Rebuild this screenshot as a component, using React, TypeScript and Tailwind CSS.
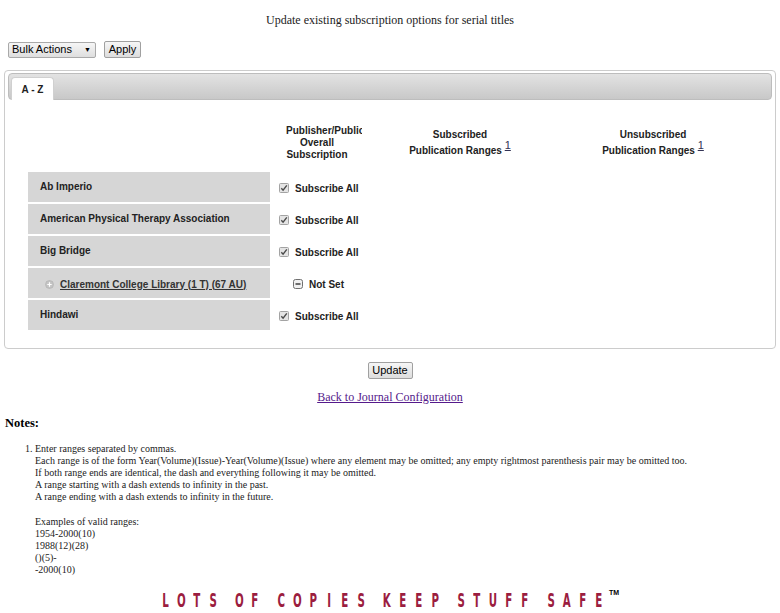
import React from 'react'

const rows = [
  { name: 'Ab Imperio', state: 'all' },
  { name: 'American Physical Therapy Association', state: 'all' },
  { name: 'Big Bridge', state: 'all' },
  { name: 'Claremont College Library (1 T) (67 AU)', state: 'none', link: true },
  { name: 'Hindawi', state: 'all' },
]

const slogan = 'LOTS OF COPIES KEEP STUFF SAFE'

function CheckIcon() {
  return (
    <svg width="10" height="10" viewBox="0 0 10 10" className="shrink-0">
      <rect x="0.5" y="0.5" width="9" height="9" rx="1" fill="#e4e4e4" stroke="#a3a3a3" />
      <path d="M2.3 5.2 L4.1 7.2 L7.8 2.4" fill="none" stroke="#4a4a4a" strokeWidth="1.4" />
    </svg>
  )
}

function MinusIcon() {
  return (
    <svg width="10" height="10" viewBox="0 0 10 10" className="shrink-0">
      <rect x="0.5" y="0.5" width="9" height="9" rx="2" fill="#f0f0f0" stroke="#707070" />
      <path d="M2.5 5 H7.5" stroke="#333" strokeWidth="1.4" />
    </svg>
  )
}

function PlusIcon() {
  return (
    <svg width="9" height="9" viewBox="0 0 9 9" className="shrink-0">
      <circle cx="4.5" cy="4.5" r="4" fill="#c4c4c4" stroke="#b0b0b0" strokeWidth="0.6" />
      <path d="M4.5 2.3 V6.7 M2.3 4.5 H6.7" stroke="#fff" strokeWidth="1.2" />
    </svg>
  )
}

export default function App() {
  const sans = "font-['Liberation_Sans',Arial,sans-serif]"
  const serif = "font-['Liberation_Serif','Times_New_Roman',serif]"

  return (
    <div className="min-h-[613px] w-[780px] overflow-hidden bg-white text-[#222]">
      <h1 className={`${serif} pt-[12px] text-center text-[12px] leading-[16px] font-normal text-[#222]`}>
        Update existing subscription options for serial titles
      </h1>

      <div className={`${sans} mt-[13px] flex items-center gap-[8px] pl-[8px] text-[11px] leading-none text-black`}>
        <div className="flex h-[16px] w-[88px] items-center justify-between rounded-[2px] border border-[#a9a9a9] bg-gradient-to-b from-[#f6f6f6] to-[#dedede] pl-[3px] pr-[4px]">
          <span>Bulk Actions</span>
          <span className="text-[7px]">▼</span>
        </div>
        <button className="flex h-[17px] w-[37px] items-center justify-center rounded-[2px] border border-[#a0a0a0] bg-gradient-to-b from-[#f6f6f6] to-[#dddddd]">
          Apply
        </button>
      </div>

      <div className="mx-[4px] mt-[12px] rounded-[4px] border border-[#cccccc] px-[3px] pt-[2px] pb-[18px]">
        <div className="flex h-[27px] items-end rounded-[4px] border border-[#bdbdbd] bg-gradient-to-b from-[#e3e3e3] to-[#c8c8c8] pl-[2px]">
          <div className={`${sans} -mb-px flex h-[23px] w-[43px] items-center justify-center rounded-t-[4px] border border-b-0 border-[#d0d0d0] bg-white text-[10px] font-bold text-[#222]`}>
            A - Z
          </div>
        </div>

        <div className={`${sans} mt-[16px] ml-[20px] grid grid-cols-[242px_90px_192px_190px] gap-[2px] text-[10px] font-bold text-[#222]`}>
          <div className="h-[54px]" />
          <div className="flex h-[54px] flex-col justify-center overflow-hidden leading-[12px]">
            <div className="whitespace-nowrap pl-[14px]">Publisher/Publication</div>
            <div className="text-center">Overall</div>
            <div className="text-center">Subscription</div>
          </div>
          <div className="flex h-[54px] flex-col justify-center text-center leading-[16px]">
            <div>Subscribed</div>
            <div>
              Publication Ranges <sup className="text-[11px] font-normal text-[#335] underline">1</sup>
            </div>
          </div>
          <div className="flex h-[54px] flex-col justify-center text-center leading-[16px]">
            <div>Unsubscribed</div>
            <div>
              Publication Ranges <sup className="text-[11px] font-normal text-[#335] underline">1</sup>
            </div>
          </div>

          {rows.map((row) => (
            <React.Fragment key={row.name}>
              <div className="flex h-[30px] items-center bg-[#d6d6d6] pb-[1px] pl-[12px]">
                {row.link ? (
                  <div className="flex items-center gap-[6px] pl-[5px] pt-[3px]">
                    <PlusIcon />
                    <a className="text-[#333] underline">{row.name}</a>
                  </div>
                ) : (
                  <span>{row.name}</span>
                )}
              </div>
              <div className="flex h-[30px] items-center whitespace-nowrap">
                {row.state === 'all' ? (
                  <div className="flex items-center gap-[6px] pl-[7px] pt-[2px]">
                    <CheckIcon />
                    <span>Subscribe All</span>
                  </div>
                ) : (
                  <div className="flex items-center gap-[6px] pl-[21px] pt-[2px]">
                    <MinusIcon />
                    <span>Not Set</span>
                  </div>
                )}
              </div>
              <div />
              <div />
            </React.Fragment>
          ))}
        </div>
      </div>

      <div className="mt-[13px] flex justify-center">
        <button className={`${sans} flex h-[17px] w-[45px] items-center justify-center rounded-[2px] border border-[#a0a0a0] bg-gradient-to-b from-[#f6f6f6] to-[#dddddd] text-[11px] text-black`}>
          Update
        </button>
      </div>

      <div className={`${serif} mt-[10px] text-center text-[12px] leading-[16px]`}>
        <a className="text-[#551a8b] underline">Back to Journal Configuration</a>
      </div>

      <div className={`${serif} px-[5px]`}>
        <h4 className="mt-[11px] text-[12.5px] font-bold leading-[14px] text-black">Notes:</h4>
        <ol className="mt-[13px] list-decimal pl-[30px] text-[10px] leading-[12px] text-[#222]">
          <li>
            Enter ranges separated by commas.
            <br />
            Each range is of the form Year(Volume)(Issue)-Year(Volume)(Issue) where any element may be omitted; any empty rightmost parenthesis pair may be omitted too.
            <br />
            If both range ends are identical, the dash and everything following it may be omitted.
            <br />
            A range starting with a dash extends to infinity in the past.
            <br />
            A range ending with a dash extends to infinity in the future.
            <div className="h-[13px]" />
            Examples of valid ranges:
            <br />
            1954-2000(10)
            <br />
            1988(12)(28)
            <br />
            ()(5)-
            <br />
            -2000(10)
          </li>
        </ol>
      </div>

      <div className="mt-[13px] flex h-[22px] items-start pl-[157px]">
        {slogan.split('').map((ch, i) =>
          ch === ' ' ? (
            <span key={i} className="w-[10px]" />
          ) : (
            <span key={i} className="flex h-[22px] w-[16px] justify-center">
              <span className="inline-block scale-x-[0.6] font-['DejaVu_Sans_Condensed','DejaVu_Sans',sans-serif] text-[19px] font-bold leading-[22px] text-[#9b1d40]">
                {ch}
              </span>
            </span>
          )
        )}
        <span className={`${sans} ml-[2px] text-[7px] font-bold leading-none text-black`}>TM</span>
      </div>
    </div>
  )
}
